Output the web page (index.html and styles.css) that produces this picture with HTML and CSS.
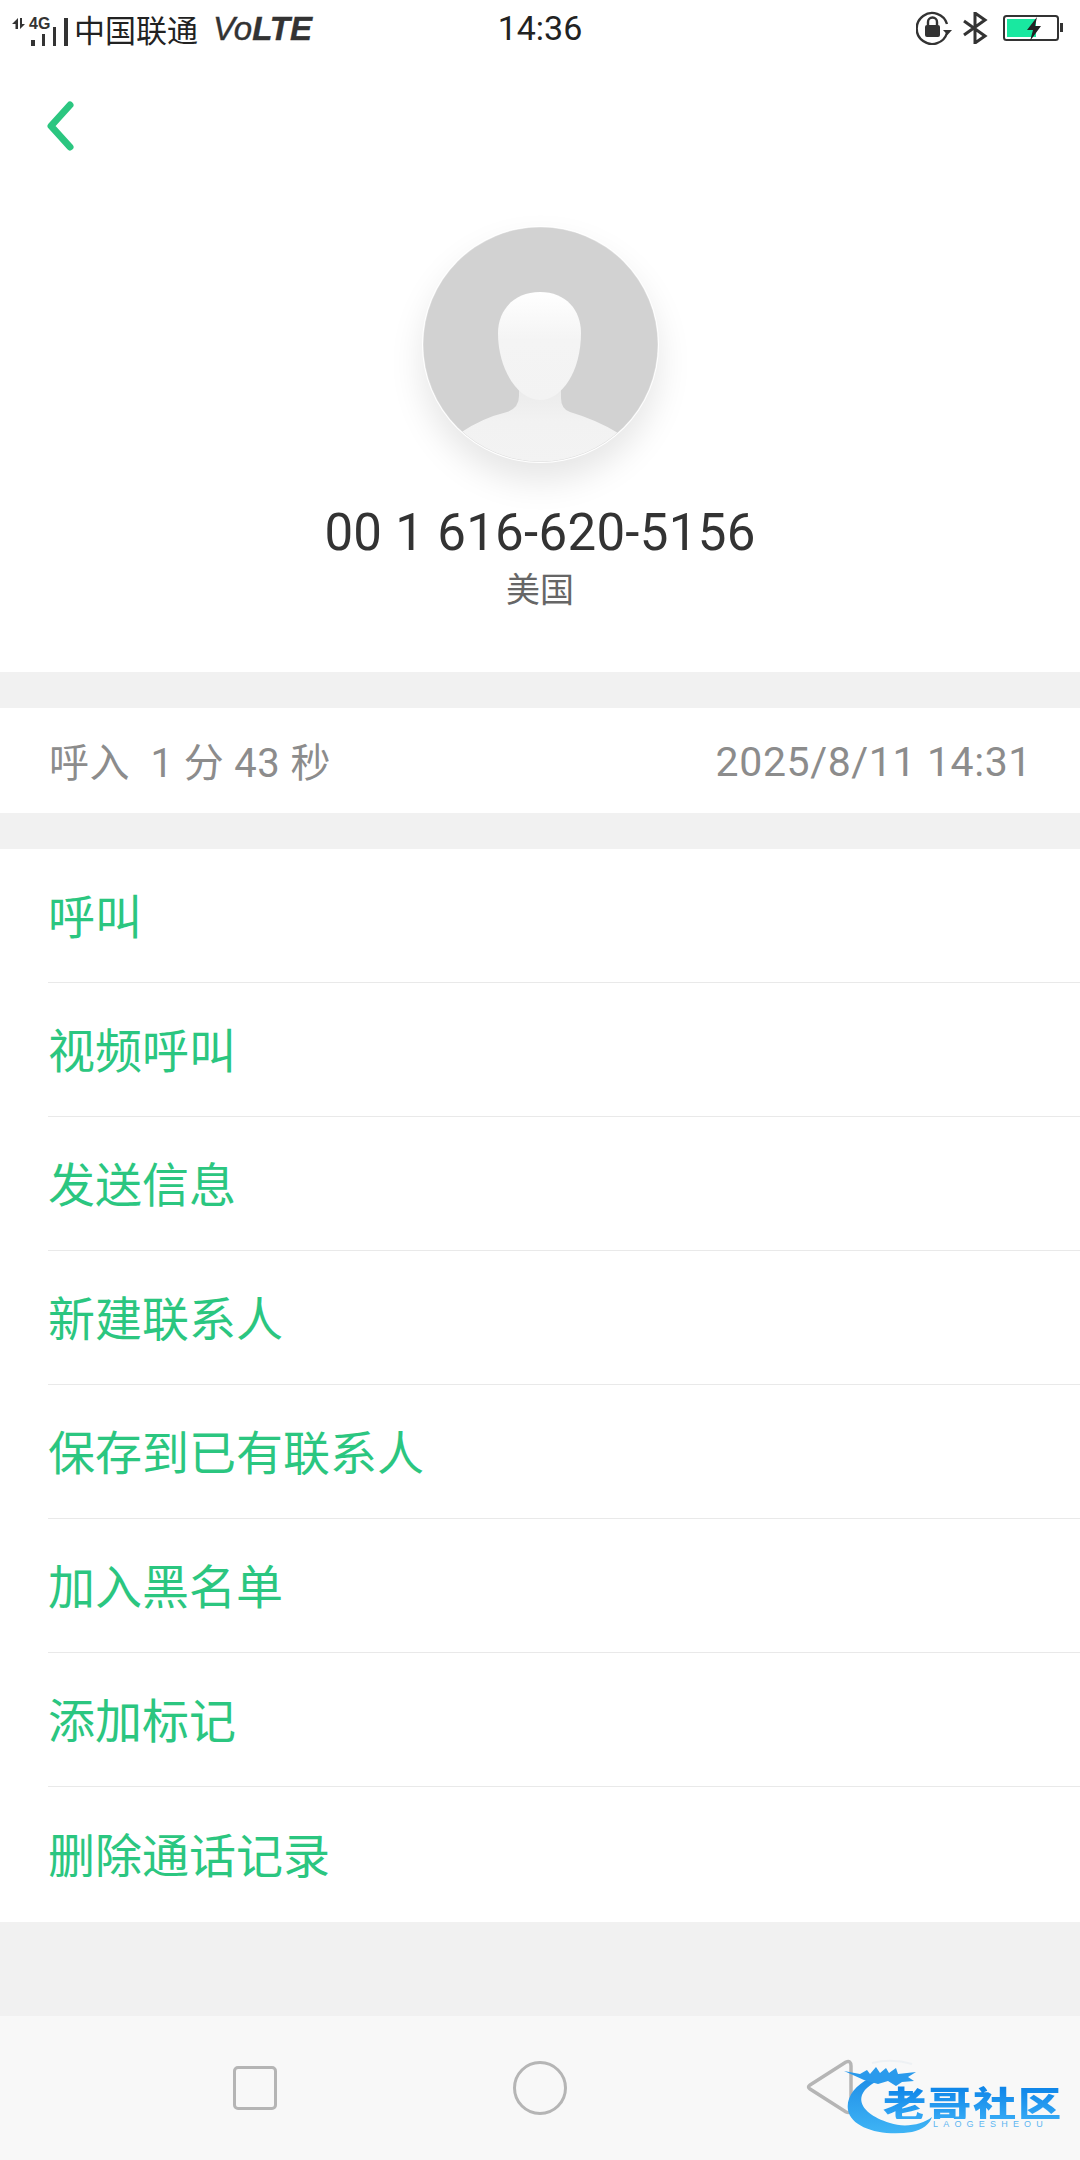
FILE: index.html
```html
<!DOCTYPE html>
<html lang="zh-CN">
<head>
<meta charset="utf-8">
<title>通话详情</title>
<link rel="stylesheet" href="styles.css">
</head>
<body>
<div class="phone">
  <div class="status">
    <div class="status-left">
      <svg class="signal" width="72" height="44" viewBox="0 0 72 44">
        <path d="M18 13V24H15.500V19H12ZM20 13V24L25 19H22V13Z" fill="#333"/>
        <text x="29" y="24" class="net">4G</text>
        <rect x="31" y="35" width="4" height="6" fill="#333"/>
        <rect x="42" y="29" width="3" height="12" fill="#333"/>
        <rect x="53" y="22" width="3" height="19" fill="#333"/>
        <rect x="64" y="13" width="4" height="28" fill="#333"/>
      </svg>
      <span class="carrier">中国联通</span>
      <span class="volte">Vo<b>LTE</b></span>
    </div>
    <div class="clock">14:36</div>
    <div class="status-right">
      <svg width="38" height="34" viewBox="0 0 38 34" fill="none">
        <path d="M31 22A15.500 15.500 0 1 1 31 13" stroke="#333" stroke-width="2.400"/>
        <path d="M27 19h9l-4.500 5z" fill="#333"/>
        <rect x="9" y="14" width="15" height="12" rx="2" fill="#333"/>
        <path d="M12 14v-3a4.500 4.500 0 0 1 9 0v3" stroke="#333" stroke-width="2.400"/>
      </svg>
      <svg width="26" height="32" viewBox="0 0 26 32" fill="none">
        <path d="M2 9l21 15-10 7V1l10 7L2 23" stroke="#333" stroke-width="3"/>
      </svg>
      <svg class="battery" width="60" height="28" viewBox="0 0 60 28" fill="none">
        <rect x="1" y="2" width="54" height="24" rx="2.500" stroke="#333" stroke-width="2"/>
        <rect x="4" y="5" width="29" height="18" fill="#19e8a0"/>
        <path d="M34 3L24 16h6l-3 11 11-15h-6z" fill="#222"/>
        <rect x="57" y="9" width="3" height="9" fill="#333"/>
      </svg>
    </div>
  </div>

  <header class="topbar">
    <svg width="30" height="52" viewBox="0 0 30 52" fill="none">
      <path d="M24 5L5 26l19 21" stroke="#2bc680" stroke-width="7" stroke-linecap="round" stroke-linejoin="round"/>
    </svg>
  </header>

  <section class="profile">
    <svg class="avatar" width="237" height="237" viewBox="0 0 237 237">
      <defs>
        <clipPath id="round"><circle cx="118.500" cy="118.500" r="117"/></clipPath>
        <linearGradient id="face" x1="0" y1="0" x2="0" y2="1">
          <stop offset="0" stop-color="#ffffff"/>
          <stop offset="0.450" stop-color="#f4f4f4"/>
          <stop offset="1" stop-color="#f3f3f3"/>
        </linearGradient>
        <linearGradient id="neck" x1="0" y1="0" x2="0" y2="1">
          <stop offset="0" stop-color="#e8e8e8"/>
          <stop offset="0.500" stop-color="#f2f2f2"/>
          <stop offset="1" stop-color="#f3f3f3"/>
        </linearGradient>
      </defs>
      <circle cx="118.500" cy="118.500" r="117.500" fill="#e6e6e6"/>
      <g clip-path="url(#round)">
        <rect width="237" height="237" fill="#d2d2d2"/>
        <path d="M97 150V170Q97 182 85 186Q60 192 38 207L30 240H207L196 207Q175 194 148 186Q139 183 139 172V150Z" fill="url(#neck)"/>
        <path d="M118 66C92 66 76 84 76 107C76 145 97 174 118 174C140 174 159 145 159 107C159 84 144 66 118 66Z" fill="url(#face)"/>
      </g>
    </svg>
    <div class="phone-number">00 1 616-620-5156</div>
    <div class="region">美国</div>
  </section>

  <section class="record">
    <span class="record-type">呼入&nbsp; 1 分 43 秒</span>
    <span class="record-date">2025/8/11 14:31</span>
  </section>

  <ul class="actions">
    <li class="action">呼叫</li>
    <li class="action">视频呼叫</li>
    <li class="action">发送信息</li>
    <li class="action">新建联系人</li>
    <li class="action">保存到已有联系人</li>
    <li class="action">加入黑名单</li>
    <li class="action">添加标记</li>
    <li class="action">删除通话记录</li>
  </ul>

  <div class="filler"></div>

  <nav class="navbar">
    <span class="nav-square"></span>
    <span class="nav-circle"></span>
    <svg class="nav-back" width="48" height="56" viewBox="0 0 48 56" fill="none">
      <path d="M40 3L4 26Q1 28 4 30L40 53Q45 55 45 49V7Q45 1 40 3Z" stroke="#b5b5b5" stroke-width="3.500"/>
    </svg>
  </nav>

  <div class="watermark">
    <svg class="dragon" width="140" height="78" viewBox="0 0 140 78" fill="none">
      <defs>
        <linearGradient id="ring" x1="0" y1="0" x2="0" y2="1">
          <stop offset="0" stop-color="#1f8fe8"/>
          <stop offset="1" stop-color="#3fb4f5"/>
        </linearGradient>
      </defs>
      <path d="M28 20C12 28 4 40 6 52C9 70 40 79 70 74C80 72 88 66 90 59C80 67 62 70 48 65C28 59 16 48 20 37C23 30 30 25 40 21Z" fill="url(#ring)"/>
      <path d="M2 13L18 16L25 12L28 16L34 9L38 15L44 10L47 15L54 10L56 16L74 14L66 19L72 23L60 24L54 28L46 23L36 26L22 22Z" fill="#2a9aec"/>
      <path d="M30 5Q50 0 70 6" stroke="#eef1f4" stroke-width="2"/>
    </svg>
    <div class="wm-title">老哥社区</div>
    <div class="wm-sub">LAOGESHEOU</div>
  </div>
</div>
</body>
</html>
```
FILE: styles.css
```css
* { box-sizing: border-box; }
html, body { margin: 0; padding: 0; }
body { font-family: Roboto, "Noto Sans CJK SC", sans-serif; background: #fff; }
.phone { position: relative; width: 1080px; height: 2160px; display: flex; flex-direction: column; background: #f1f1f1; overflow: hidden; }

.status { height: 56px; background: #fff; display: grid; grid-template-columns: 1fr auto 1fr; align-items: center; }
.status-left { display: flex; align-items: center; height: 56px; }
.signal { margin-top: -2px; flex: none; }
.net { font: bold 16px "Liberation Sans", sans-serif; fill: #333; }
.carrier { font: 400 31px/1 "Noto Sans CJK SC", sans-serif; color: #222; margin-left: 2px; }
.volte { font: italic 400 33px/1 "Liberation Sans", sans-serif; color: #333; margin-left: 15px; -webkit-text-stroke: .4px #333; }
.volte b { font-weight: 700; }
.clock { font: 400 34px/1 Roboto, sans-serif; color: #222; }
.status-right { display: flex; justify-content: flex-end; align-items: center; gap: 8px; padding-right: 17px; }
.battery { margin-left: 7px; }

.topbar { height: 127px; background: #fff; padding: 44px 0 0 46px; display: flex; align-items: flex-start; }

.profile { height: 489px; background: #fff; display: flex; flex-direction: column; align-items: center; padding-top: 43px; }
.avatar { border-radius: 50%; box-shadow: 0 18px 34px rgba(0,0,0,.10); flex: none; }
.phone-number { font: 400 51px/56px Roboto, sans-serif; color: #333; margin-top: 42px; letter-spacing: .3px; }
.region { font: 400 34px/46px "Noto Sans CJK SC", sans-serif; color: #666; margin-top: 4px; }

.record { margin-top: 36px; height: 105px; background: #fff; display: flex; justify-content: space-between; align-items: center; padding: 0 48px 0 49px; color: #8c8c8c; font-size: 41px; }
.record-type { font-size: 40px; letter-spacing: .4px; margin-top: -2px; }
.record-date { letter-spacing: .6px; margin-top: 3px; }

.actions { list-style: none; margin: 36px 0 0; padding: 0 0 0 48px; background: #fff; }
.action { height: 134px; padding-bottom: 4px; display: flex; align-items: center; font: 400 47px/1 "Noto Sans CJK SC", sans-serif; color: #2bc680; border-bottom: 1px solid #e9e9e9; }
.action:last-child { height: 135px; border-bottom: 0; }

.filler { flex: 1; }

.navbar { position: relative; height: 144px; background: #f8f8f8; display: flex; align-items: center; }
.nav-square { position: absolute; left: 233px; top: 50px; width: 44px; height: 44px; border: 3px solid #b5b5b5; border-radius: 5px; }
.nav-circle { position: absolute; left: 513px; top: 45px; width: 54px; height: 54px; border: 3px solid #b5b5b5; border-radius: 50%; }
.nav-back { position: absolute; left: 806px; top: 43px; }

.watermark { position: absolute; left: 840px; top: 2058px; width: 240px; height: 78px; }
.dragon { position: absolute; left: 2px; top: 0; }
.wm-title { position: absolute; left: 43px; top: 28px; font: 900 36px/33px "Noto Sans CJK SC", sans-serif; white-space: nowrap; letter-spacing: 1.500px; transform: scaleX(1.2); transform-origin: left center; background: linear-gradient(#0d84e8, #34a8f4); -webkit-background-clip: text; background-clip: text; color: transparent; }
.wm-sub { position: absolute; left: 93px; top: 62px; font: 400 9px/9px "Liberation Sans", sans-serif; color: #5db6f2; letter-spacing: 5.200px; white-space: nowrap; }
```
